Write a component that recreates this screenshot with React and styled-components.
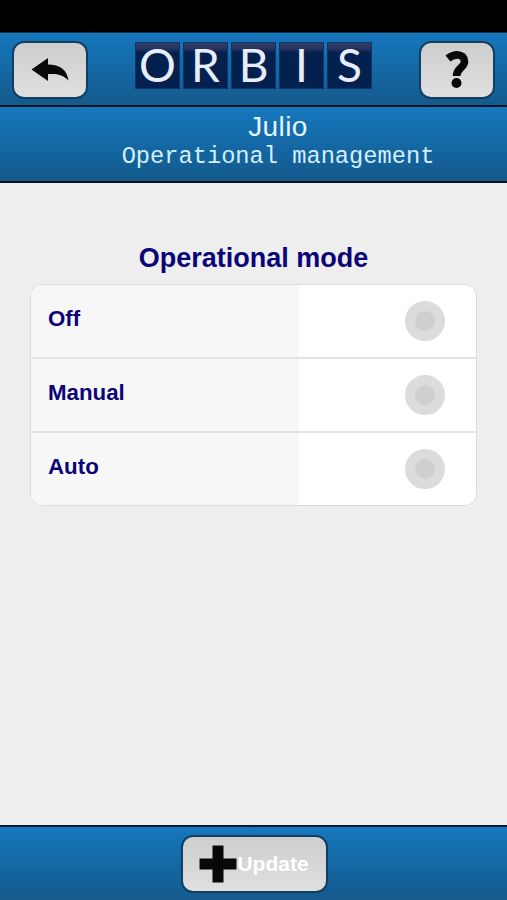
import React from "react";
import styled, { createGlobalStyle } from "styled-components";

const GlobalStyle = createGlobalStyle`
  * {
    box-sizing: border-box;
  }
  body {
    margin: 0;
    background-color: #eeeeee;
    font-family: "Liberation Sans", Arial, sans-serif;
  }
`

const Screen = styled.div`
  display: flex;
  flex-direction: column;
  width: 507px;
  height: 900px;
  overflow: hidden;
  background-color: #eeeeee;
`

const StatusBar = styled.div`
  height: 32px;
  flex: none;
  background-color: #000000;
`

const Bar = styled.div`
  display: flex;
  flex: none;
  background-image: linear-gradient(#1878bf, #1471b3 20%, #145a8c);
`

const Header = styled(Bar)`
  justify-content: space-between;
  align-items: flex-start;
  height: 75px;
  padding: 8px 12px 0;
  border-top: 1px solid #0a3350;
  border-bottom: 2px solid #061425;
`

const SubHeader = styled(Bar)`
  flex-direction: column;
  align-items: center;
  height: 76px;
  padding: 4px 0 0 49px;
  border-bottom: 2px solid #0a1420;
`

const Footer = styled(Bar)`
  justify-content: center;
  height: 75px;
  padding: 8px 0 0 1px;
  border-top: 2px solid #061b2e;
`

const Button = styled.button`
  display: flex;
  align-items: center;
  justify-content: center;
  width: ${(props) => props.$width}px;
  height: 58px;
  padding: 0;
  border: 2px solid #123f61;
  border-radius: 12px;
  background-image: linear-gradient(#cecece, #dfdfdf);
  color: #ffffff;
  font-family: inherit;
  font-size: 21px;
  font-weight: bold;
`

const Logo = styled.div`
  display: flex;
  gap: 3px;
  margin-top: 1px;
`

const Tile = styled.div`
  width: 45px;
  height: 47px;
  border: 1px solid #0c3767;
  background-image: linear-gradient(#323f6c, #26345f 12%, #04204f 22%, #04204f);
  color: #e6eefb;
  font-family: Lato, sans-serif;
  font-size: 46px;
  line-height: 44px;
  text-align: center;
`

const UserName = styled.div`
  font-size: 28px;
  line-height: 32px;
  letter-spacing: 0.4px;
  color: #e4f5ff;
`

const PageName = styled.div`
  font-family: "Liberation Mono", "Courier New", monospace;
  font-size: 23.7px;
  line-height: 27px;
  color: #d5efff;
  white-space: nowrap;
`

const Main = styled.div`
  display: flex;
  flex: 1;
  flex-direction: column;
  align-items: center;
  padding-top: 60px;
`

const Title = styled.h1`
  margin: 0 0 11px;
  font-size: 27px;
  line-height: 30px;
  color: #0a0478;
`

const Options = styled.div`
  width: 447px;
  height: 222px;
  border: 1px solid #dcdcdc;
  border-radius: 12px;
  overflow: hidden;
  background-color: #ffffff;
`

const Option = styled.div`
  display: grid;
  grid-template-columns: 268px 1fr;
  height: 74px;
  border-bottom: 2px solid #e2e2e2;
  &:last-child {
    border-bottom: none;
  }
`

const OptionName = styled.div`
  padding: 21px 0 0 17px;
  background-color: #f7f7f7;
  color: #0a0478;
  font-size: 22.3px;
  font-weight: bold;
  line-height: 25px;
`

const OptionValue = styled.div`
  display: flex;
  align-items: flex-start;
  justify-content: flex-end;
  padding: 16px 31px 0 0;
`

const Radio = styled.div`
  width: 40px;
  height: 40px;
  border: 10px solid #dcdcdc;
  border-radius: 50%;
  background-color: #cfcfcf;
`

const modes = ["Off", "Manual", "Auto"]

const BackIcon = () => (
  <svg width="38" height="24" viewBox="0 0 38 24">
    <path d="M0.500 11.500 L17 0 V6.500 C29 6.500 36 12 37.500 22.500 C32 16.500 26 15.500 17 16 V23 Z" fill="#080808" />
  </svg>
)

const HelpIcon = () => (
  <svg width="24" height="38" viewBox="0 0 24 38">
    <path d="M3 7.500 C9 2.500 19.500 2 19.500 10.500 C19.500 17 11.500 17 11.500 25" fill="none" stroke="#080808" strokeWidth="7.600" />
    <circle cx="11.500" cy="32" r="5" fill="#080808" />
  </svg>
)

const PlusIcon = () => (
  <svg width="38" height="38" viewBox="0 0 38 38">
    <path d="M13.500 0.500 H24.500 V13.500 H37.500 V24.500 H24.500 V37.500 H13.500 V24.500 H0.500 V13.500 H13.500 Z" fill="#080808" />
  </svg>
)

const App = () => {
  return (
    <Screen>
      <GlobalStyle />
      <StatusBar />
      <Header>
        <Button $width={76} aria-label="Back"><BackIcon /></Button>
        <Logo>
          {"ORBIS".split("").map((letter) => <Tile key={letter}>{letter}</Tile>)}
        </Logo>
        <Button $width={76} aria-label="Help"><HelpIcon /></Button>
      </Header>
      <SubHeader>
        <UserName>Julio</UserName>
        <PageName>Operational management</PageName>
      </SubHeader>
      <Main>
        <Title>Operational mode</Title>
        <Options>
          {modes.map((mode) => (
            <Option key={mode}>
              <OptionName>{mode}</OptionName>
              <OptionValue><Radio /></OptionValue>
            </Option>
          ))}
        </Options>
      </Main>
      <Footer>
        <Button $width={147}><PlusIcon />Update</Button>
      </Footer>
    </Screen>
  )
}

export default App;
